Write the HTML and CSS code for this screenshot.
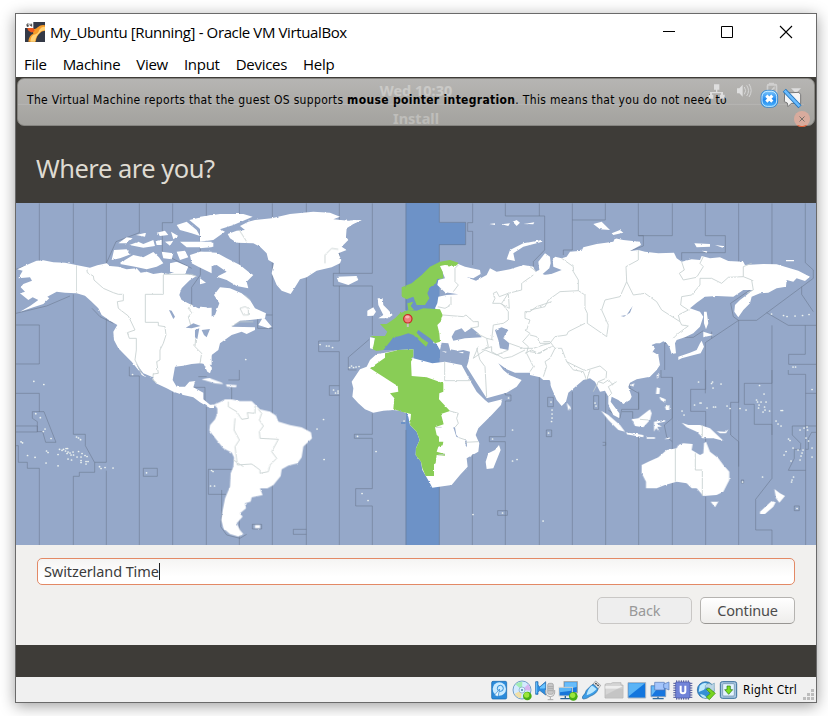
FILE: index.html
```html
<!DOCTYPE html>
<html lang="en">
<head>
<meta charset="utf-8">
<title>My_Ubuntu [Running] - Oracle VM VirtualBox</title>
<link rel="stylesheet" href="styles.css">
</head>
<body>
<main class="window">
  <header class="titlebar">
    <svg class="app-icon" viewBox="0 0 60 60">
      <rect width="60" height="60" fill="#343946"/>
      <path d="M22 19Q31 24 38 16Q48 7 60 10V26Q49 26 44 34Q35 41 32 59H10Q12 39 25 35Z" fill="#f69b28"/>
      <path d="M26 38Q40 36 43 23Q51 12 60 15V25Q47 25 43 34Q33 41 30 59H16Q17 42 26 38Z" fill="#ffd277"/>
      <path d="M7 18H25L29 26Q21 37 9 25Z" fill="#ee581e"/>
      <path d="M0 0H25V18H0Z" fill="#fff"/>
      <path d="M6 6H11M6 6V13H10V10H6M15 5V10H20M20 5V14" stroke="#333" stroke-width="2.5" fill="none"/>
    </svg>
    <h1 class="title">My_Ubuntu [Running] - Oracle VM VirtualBox</h1>
    <svg class="controls" viewBox="0 0 140 20" fill="none" stroke="#000">
      <path d="M5 9.500H17M63.500 4.500H74.500V15.500H63.500Z"/>
      <path d="M122 4L134 16M134 4L122 16" stroke-width="1.100"/>
    </svg>
  </header>
  <nav class="menu"><span>File</span><span>Machine</span><span>View</span><span>Input</span><span>Devices</span><span>Help</span></nav>

  <section class="guest">
    <div class="panel">Wed 10:30</div>
    <div class="installer-bar">Install</div>
    <div class="message">
      <p>The Virtual Machine reports that the guest OS supports <b>mouse pointer integration</b>. This means that you do not need to</p>
      <svg class="message-icons" viewBox="0 0 330 144">
        <g fill="#dedede" stroke="none">
          <path d="M60 19H76V35H70V42H87V50H92V62H78V50H81V46H54V50H58V62H44V50H48V42H66V35H60Z"/>
          <path d="M129 31H136L146 20V56L136 46H129Z"/>
          <path d="M151 27Q159 38 151 49M158 22Q169 38 158 54M165 18Q178 38 165 57" fill="none" stroke="#d6d6d6" stroke-width="3"/>
          <path d="M218 52V24Q218 17 224 17H225V14H240V17H245Q250 17 250 24V51H245V23H223V52Z" opacity=".65"/>
          <path d="M228 39L242 24V34H238L234 43Z" opacity=".7"/><path d="M291 31H321L306 46Z"/>
        </g>
        <path d="M-2200 79H330" stroke="#fff" stroke-opacity=".14" stroke-width="3"/>
        <defs><linearGradient id="blue" x2="0" y2="1"><stop stop-color="#82cbff"/><stop offset=".55" stop-color="#2188ed"/><stop offset="1" stop-color="#51b7ff"/></linearGradient></defs>
        <rect x="201" y="37" width="50" height="51" rx="18" fill="url(#blue)" stroke="#2377c5" stroke-width="2"/>
        <rect x="204" y="40" width="44" height="45" rx="16" fill="none" stroke="#dbf4ff" stroke-width="2.500"/>
        <path d="M217 53L235 71M235 53L217 71" stroke="#fff" stroke-width="9"/>
        <path d="M272 45L315 43L320 50V77L292 76L282 86L280 75L271 71Z" fill="#f4f4f4" stroke="#777" stroke-width="3"/>
        <path d="M271 37L318 86" stroke="#2574b9" stroke-width="13"/><path d="M272 38L317 85" stroke="#6abcff" stroke-width="8"/>
      </svg>
    </div>
    <svg class="guest-close" viewBox="0 0 16 16"><circle cx="8" cy="8" r="8" fill="#d8ab9d"/><path d="M3.500 14.500Q8 17 12.500 14.500" fill="none" stroke="#df5428"/><path d="M5.500 5.500L10.500 10.500M10.500 5.500L5.500 10.500" stroke="#777069"/></svg>
    <h2 class="question">Where are you?</h2>

    <svg class="map" viewBox="16 203 800 342">
      <defs><filter id="coast" x="0" y="0" width="100%" height="100%" color-interpolation-filters="sRGB"><feTurbulence type="fractalNoise" baseFrequency=".25" numOctaves="3" seed="4"/><feDisplacementMap in="SourceGraphic" scale="2" xChannelSelector="R" yChannelSelector="G"/></filter></defs>
      <rect x="16" y="203" width="800" height="342" fill="#95a8c9"/>
      <path class="active" d="M405.700 203H439.500V222.500H465.500V245H439.500V545H405.700V422H401V424H406V413H410V320H405.700ZM380 350L391 334L418 330L440 330V358L432 363L410 358L410 350Z"/>

      <g class="zones">
        <g transform="translate(10 200) scale(.3333)"><path d="M88 10V190M190 10V190M190 283V703H226V737L254 788V817H208V829H190V1035M289 10V190M289 350V787H254M289 812V1035M388 10V98L318 125L289 190M488 10V68H457V160L545 205M571 50V225L545 262V320M18 208L40 200M18 340L110 318L180 288M18 375H88V492H18M18 580H88V636M18 678H82V696H18M67 635H102L138 727H107L98 695H82V665L67 655ZM25 737V787H52V805H88V1035M18 737H25M246 325L270 350L310 370M358 500V528H388V1035M488 575V1035M589 620V1035M400 805H442V829H400Z"/></g>
        <g transform="translate(200 200) scale(.3333)"><path d="M19 10V50M118 10V50M118 90L138 125M118 125V195M217 10V345H180M217 345V385H173V350M319 10V1035M418 10V220M418 258V423H356V455H418V1035M517 10V220H400V258H517V405M508 418L445 472V510H470M517 640V703H463V715H517V866H467V918H517V1035M217 385V1035M118 510V540H85M118 900V1035"/></g>
        <g transform="translate(180 370) scale(.3333)"><path d="M158 298H85V373H138M217 463H245V477H217ZM379 478H340V493H379M478 47H448V76H478M24 52H75V95M55 20H80M155 50V90M125 360V430L122 470L140 495L180 505L200 493"/></g>
        <g transform="translate(350 200) scale(.3333)"><path d="M268 10V67H347V134H268V185M368 10V68H353V94H368V195M466 10V48H584V150L550 185V200M568 10V48M268 860V1035M168 330V10M168 690V1035"/></g>
        <g transform="translate(530 200) scale(.3333)"><path d="M127 10V60H226V10M127 60V150H100V165M325 10V107H427V10M325 107H340V138L280 160M526 10V107H586V158H455V180M626 10V185M726 10V195M826 10V188L850 210V235L680 361H625L610 350L602 310L660 270M815 260V283L850 335M710 338L775 376H858M626 361L526 428V580M545 395V415M858 493H776V463H826V376M626 361V800M726 376V705M420 430H404V510M520 392L490 412H440"/></g>
        <g transform="translate(345 340) scale(.3333)"><path d="M382 335V615M481 110V165H498V183H481V290H433V305H481V615M583 105V615M458 512H487V526H458Z"/></g>
        <g transform="translate(540 370) scale(.3333)"><path d="M97 65V525M197 70V525M296 200V525M161 77H176V118H161ZM296 65V118H245L240 145L205 120M296 118V70M270 40V55L296 70M23 82H40V110H23ZM19 180H35V200H19ZM188 217H197V226H188M246 125H278V145M397 22V525M363 0V22H397V145L373 165L380 200L397 215M497 0V58H452V124H497V215M497 380V525M596 0V97H572V195L596 215V525M696 0V40H613V103H643V163H696V325L647 388V480H696V525M745 0V13H797V525M797 70H828M828 168H757V195L782 220V238H763V265L745 301H797M828 187H815L805 205V238H797M763 408H778V422H763ZM604 330H611V339H604Z"/></g>
      </g>

      <g class="land" filter="url(#coast)">
        <g transform="translate(10 200) scale(.3333)">
          <path d="M22 208L50 195L78 183L100 181L130 187L165 188L210 197L240 203L262 196L290 190L300 198L325 200L350 208L380 205L392 218L410 215L430 222L455 218L475 222L500 214L530 222L560 228L540 240L530 250L515 265L508 285L515 300L545 315L565 325L605 323V495L570 490L545 492L520 497L495 500L488 540L500 560L525 560L538 545L556 543L550 562L580 578V598L600 614H612V624H600L570 607L550 592L520 585L490 575L470 565L438 550L425 530L400 520L378 490L395 525L408 532L385 510L365 485L350 470L325 445L312 420L310 395L322 375L300 362L275 345L265 325L245 305L225 287L200 280L165 278L140 275L112 290L118 295L100 312L70 322L30 335L60 318L85 300L68 292L55 300L30 280L45 275L32 262L40 252L66 242L60 232L25 235L38 212Z"/>
          <path d="M312 150L350 148L362 163L330 175L305 180ZM345 180L370 165L400 172L430 156L447 172L460 190L440 200L410 208L375 200L330 192ZM325 130L350 112L368 115L350 130ZM358 135L385 125L400 132L430 120L435 138L400 143ZM378 105L408 98L405 110ZM440 98L465 92L475 105L450 108ZM483 95L505 108L490 118ZM500 75L530 65L560 90L570 108L545 100L510 90ZM538 60L605 45V115L580 108L568 85ZM510 125H605V142H530ZM500 155L525 152L535 172L510 180ZM455 155L490 160L485 178L460 175ZM540 165L570 155H605V220L565 200L545 190ZM480 190L500 185L535 200L525 222L480 215ZM437 124L455 120V135H440ZM465 125L490 122L480 137Z"/>
          <path d="M605 500H592L598 510H605ZM575 538L600 535L605 542Z"/>
        </g>
        <g transform="translate(200 200) scale(.3333)">
          <path d="M83 102L110 92L135 90L120 78L145 65L165 60L215 55L270 42L340 35L390 38L420 50L400 58L445 62L485 60L460 72L440 85L438 110L445 120L425 140L440 150L415 160L424 180L420 190L395 202L350 212L320 232L300 238L280 270L272 282L245 272L230 255L215 220L222 190L205 180L200 160L180 140L160 130L110 128L90 115Z"/>
          <path d="M0 50L60 42L130 42L158 50L130 62L100 75L60 88L75 95L40 120L0 125ZM0 128H40V140L0 145ZM0 155L50 158L80 175L120 195L145 215L160 225L140 245L145 265L110 258L80 240L50 230L80 215L50 195L20 200L0 190ZM0 235L18 248L0 253ZM0 320L20 322L32 350L45 345L58 310L42 285L60 262L90 265L125 280L150 300L165 325L198 340L195 355L150 360L120 362L95 380L165 382L165 390L140 402L125 395L95 405L60 430L55 450L35 465L25 485L35 505L30 520L22 515L10 490L-5 480ZM175 375L190 350L215 380L205 385ZM410 230L470 228L475 240L445 255L415 245ZM533 295H548L550 315L565 330L578 345L565 355H535L550 345L535 315ZM502 332L520 322L528 335L520 347L502 348Z"/>
        </g>
        <g transform="translate(180 370) scale(.3333)">
          <path d="M68 92L88 108L103 103L118 97L135 88H155L180 93H215L240 118L270 125L288 137L295 155L330 165L365 172L393 187L396 205L370 230L365 262L352 280L325 287L305 298L302 318L280 345L262 355H240L248 375L215 382L212 395L195 400L198 415L180 430L188 440L170 460L180 480L190 492L175 500L150 492L130 475L124 450L128 420L135 385L150 350L152 310L160 290L162 262L155 248L130 235L110 210L88 182L90 165L105 148L112 130V115L105 107L90 112Z"/>
          <path d="M65 28L90 25L125 38L130 42L105 40ZM138 43L170 45L168 52L140 50ZM105 50L118 51M225 465H240V474H225Z"/>
        </g>
        <g transform="translate(350 200) scale(.3333)">
          <path d="M325 192L345 200L390 210L392 222L370 235L350 232L378 242L410 225L420 205L440 215L480 208L520 195L550 200L556 215L580 225L605 222V545L580 528L560 518H495L470 508L445 490L460 510L478 525L515 540L500 560L470 578L410 595L380 548L350 500L355 485L360 455L340 450L325 452L300 448L295 430L275 428L270 450L258 430L250 430L265 335L255 325L262 310L265 290L290 285L325 283L285 277L262 255L265 240L285 235L275 210L260 200L290 190Z"/>
          <path d="M575 120L577 125L520 140L490 160L495 183L470 178L480 150L520 130ZM60 412L75 415L70 448L60 445ZM418 72L435 70V75ZM455 73L480 70L475 78ZM488 65L500 60L510 68L500 78ZM520 72L553 67L550 73ZM0 62L35 60L0 75ZM275 453L290 455L288 458ZM325 458L340 455V460Z"/>
        </g>
        <g transform="translate(530 200) scale(.3333)">
          <path d="M0 200L15 215L28 210L25 185L45 160L60 170L62 190L58 205L38 222L50 227L95 210L70 200L68 180L75 170L95 175L110 170L120 155L155 152L160 142L200 132L250 125L255 115L280 120L330 125L333 135L300 153L325 150L345 155L385 160L432 158L440 175L455 185L485 178L510 180L515 168L540 175L570 172L595 183L640 185L645 195L700 192L740 193L775 203L805 212L840 230L825 243L800 235L790 245L770 240L768 260L740 265L715 278L690 280L665 290L660 310L640 330L625 352L613 335L615 315L630 300L650 285L668 270L640 270L610 290L560 288L525 290L500 308L480 325L510 335L520 350L510 380L490 400L465 412L440 420L435 430L438 460L425 462L418 440L410 430L400 424L390 430L378 430L365 435L375 445L368 455L385 465L390 495L380 510L360 530L320 538L300 548L295 560L305 590L300 600L280 612L265 600L245 590L242 605L268 640V655L250 645L235 615V590L225 572L210 575L195 545L180 535L160 540L115 578L108 605L95 618L80 600L63 560L60 540L40 540L30 532L0 525Z"/>
          <path d="M190 72L215 65L240 90L210 88ZM245 100L270 90L280 98L250 105ZM493 130L540 132V140L500 142ZM555 135L580 138L578 143ZM768 180H792V184H768ZM515 152L532 154L530 158ZM520 395L530 398L550 405L520 412ZM515 422L522 440L512 460L480 468L455 475L445 480V470L480 458L500 450L510 430ZM522 335H530L535 370L528 388L522 370Z"/>
        </g>
        <g transform="translate(345 340) scale(.3333)">
          <path d="M95 42L120 38L160 30L205 28V55L225 60L262 70L300 65L350 75L380 130L395 155L420 180L430 188L472 178L468 195L440 225L400 265L392 285L403 310L400 335L365 355L368 380L345 405L320 435L262 443L255 430L232 390L228 365L212 345L213 325L224 300L215 275L195 255L190 230L185 220L165 212L145 210L115 212L85 218L60 208L40 190L22 170L25 145L20 125L45 88L65 80L75 60ZM462 315L467 330L445 385L425 387L422 365L430 340L450 330Z"/>
        </g>
        <g transform="translate(540 370) scale(.3333)">
          <path d="M305 285L325 275L355 262L380 240L410 235L415 225L430 220L458 222L455 240L480 255L490 250L492 220L498 215L510 245L535 265L550 285L568 305V330L550 365L530 375L490 378L470 355H455L440 340L410 335L375 345L350 355H318V335L305 310ZM512 395H535L525 412ZM703 357L720 370L735 378L718 398L708 385ZM695 393L707 397L700 410L675 432L660 432V425ZM183 122L205 135L240 165L255 185L235 180L205 150ZM255 187L310 195V202L258 193ZM275 148L295 145L330 118L335 130L330 150L310 172L285 168ZM425 158L445 165L480 165L510 175L550 212L520 205H490L470 185L440 172ZM350 52L360 55L358 72L348 72ZM358 80L375 87V98L362 90ZM375 110L388 105V120L378 120ZM80 98L92 112L85 122ZM350 15L358 12L352 27ZM271 45L283 40L280 50ZM342 155L375 150V155L350 160L365 170L352 170L358 185L348 175L342 185ZM372 208L390 202L388 207ZM320 202L345 202V206H320ZM530 184L555 185L565 178L558 190H540Z"/>
        </g>
        <g class="green">
          <path transform="translate(350 200) scale(.3333)" d="M155 262L185 250L215 225L240 200L270 185L300 180L325 188L320 198L285 195L270 198L278 215L280 235L262 237L258 250L240 262L232 280L238 295L225 315L200 315L190 290L170 298L155 290ZM172 310L190 305L182 318L192 330L175 330ZM90 372H110L135 355L150 340L175 330L200 332L220 325L270 328L278 345L272 365L262 375L268 400L270 425L255 430L240 415L205 390L200 398L215 415L235 428L228 440L212 425L190 405L175 400L150 408L130 412L120 425L100 450L80 453L68 448L75 415L60 408H105L112 395Z"/>
          <path transform="translate(345 340) scale(.3333)" d="M75 85L120 53V40L160 30L205 28V52L198 65L200 108L245 112L295 130V155L283 160L282 178L315 213L288 222L296 253L270 262L275 285L282 290V305H295L293 316L280 320L275 335L300 342V347L275 345L272 370L267 373V408H242L232 385L228 365L212 345L213 325L224 300L215 275L195 255L198 222L170 215L145 207L148 175L135 160L160 155L158 138Z"/>
        </g>
        <g fill="#95a8c9">
          <path transform="translate(350 200) scale(.3333)" d="M305 410L315 392L335 385L345 397L365 383L385 400L395 412L345 415L310 422ZM435 390L455 382L475 390L465 405L460 415L478 430L475 450L450 445L445 420Z"/>
          <path transform="translate(10 200) scale(.3333)" d="M477 330L485 332L495 350L490 357ZM527 383L550 370L572 378L545 385ZM555 390L568 385L562 418L555 412ZM575 390L600 387L590 412L582 405Z"/>
          <path transform="translate(530 200) scale(.3333)" d="M272 348L290 345L308 318L300 338L282 350Z"/>
          <path transform="translate(345 340) scale(.3333)" d="M325 262L330 262L334 285L342 293L334 290ZM360 297L365 302L366 322L361 315Z"/>
        </g>
      </g>

      <g class="borders" filter="url(#coast)">
        <path transform="translate(10 200) scale(.3333)" d="M199 196V280M230 205L232 218L250 228L252 240L280 265L310 278L325 283H340V302L322 305L325 325L355 348L368 375L375 390L352 398L358 415H379V450L375 480L395 520M460 225V283H406V367H445V377L465 380L468 405L460 430L450 450V480L440 485L445 520L430 522M460 223H545L560 230M545 312L535 325L545 338L535 350L542 375M557 415L555 440L575 460L570 490M430 520L428 540L440 548"/>
        <path transform="translate(200 200) scale(.3333)" d="M118 90L140 125M120 325L135 320L145 325V345L130 345ZM135 285L150 300M375 190V165L395 145L415 148M95 378L120 365H160"/>
        <path transform="translate(180 370) scale(.3333)" d="M145 95V110L170 125L185 148L205 145L202 128L225 130V108M165 145L162 180L178 210L165 230L172 285L215 282L240 300V310L265 305L270 285L290 265L275 245L295 208L240 205L238 185L250 168L238 150L245 130L235 118M190 290L160 270"/>
        <path transform="translate(350 200) scale(.3333)" d="M325 195L315 205V245L325 255L310 275M262 320L285 325L303 315V290M278 345L340 350L348 345L370 365L385 365V380L360 385M380 400L410 415L415 440L405 445M385 440L370 475L405 450L440 465L475 450M410 415L430 420M425 420L430 375L460 370L475 360V335L455 310L475 280L515 270V250L550 225M430 280L440 275L448 290L475 280L478 325L450 310H428L435 295ZM605 305L560 320L540 335H525V355L540 360L530 390H525L540 400L518 425L535 440L530 460L550 500L540 515M478 430L520 445L550 445L580 435L600 430M410 590L405 500L390 480L380 445M525 460L545 450L565 460L605 440"/>
        <path transform="translate(530 200) scale(.3333)" d="M0 200L20 215M95 175L130 200L130 215L145 240L145 272L165 285L165 325L172 340V370L230 410L235 375L215 330L225 300L270 290L290 245L310 285L345 280L380 305L395 330L450 365L445 345L475 330L452 315L455 290L485 285L510 255V235L545 235L575 250L595 232L640 230V200L665 190M290 245L288 200L325 180V150M448 220L460 240L500 232L520 200L510 190L520 170M455 185L463 210L448 220M640 230L665 240L670 270L650 280M450 365L455 375L475 378L445 400L430 415M0 330L45 320L55 300L90 275L145 272M0 405L20 410L30 430L60 430L75 410L110 405L115 395L165 370M40 425H60L75 445L60 475L45 485L50 500L40 530M75 445H95L110 485L165 512L210 498L230 515L228 535L205 545L190 575M0 455L30 460L50 445M110 485L130 510L160 515L170 540L180 510M205 545L220 550L235 540L250 555"/>
        <path transform="translate(345 340) scale(.3333)" d="M299 65V122H380M315 213L340 220L335 235L340 250L330 262M342 293L363 300M360 307L400 305M272 262H290M300 342L280 345M410 30L440 20L440 35L475 55L500 50L540 30"/>
        <path transform="translate(540 370) scale(.3333)" d="M406 235V335M466 250V300H487V378M487 165V200M205 80L215 70L205 50L230 35M300 148L325 150"/>
      </g>
      <g class="islands">
        <path d="M33.800 381.300h.1M43.800 384.500h.1M35.700 413.700h.1M40.300 417.700h.1M51 438.500h.1M45 429h.1M43.300 431.500h.1M21 441.800h.1M22.500 442.800h.1M27.500 455.500h.1M35 457.300h.1M46.500 451h.1M48 452.500h.1M46 463h.1M58 465.800h.1M58 454.500h.1M59.500 449.300h.1M63.500 449.300h.1M62 450.300h.1M66 448.500h.1M67.500 448.500h.1M65.500 451h.1M68 452h.1M70 453h.1M71 455h.1M73 452h.1M73.500 455h.1M67 453.500h.1M68 459h.1M71.500 460h.1M77 457h.1M78.500 451.500h.1M82 453.500h.1M81 457h.1M81 460.500h.1M81 462.500h.1M86 461.500h.1M88 461.500h.1M86 464h.1M87 456.500h.1M85 455.500h.1M76.500 437h.1M78.500 438h.1M80.500 439.700h.1M99.500 466.700h.1M101 468.500h.1M105 467.500h.1M113 468h.1M146.500 472.800h.1M132.500 374.500h.1M245.700 359.500h.1M320 344.500h.1M326.500 346h.1M329 346h.1M332.500 347.500h.1M333.500 390h.1M335.500 393h.1M338 391h.1M338 393h.1M317 429h.1M323.500 419.500h.1M324 459.500h.2M357.500 436.300h.1M376 451.500h.1M362 493.500h.1M368 500.500h.1M211.500 470.500h.1M213 471.500h.1M210.500 486h.1M214.500 486h.1M351.500 366h.1M349.500 367.500h.1M353.500 367.500h.1M356 367h.1M359 366.500h.1M404 421h.1M473 514.500h.1M502.500 513h.1M492.500 439h.1M512.500 430h.1M517 459.500h.1M512.500 461h.1M508.500 398h.1M543 521h.2M551 402h.1M552 410h.1M552 414h.1M552 418h.1M551.500 421.500h.1M548.500 433h.1M595 403h.1M596 406h.1M712.500 382h.1M713 388h.1M711.500 383.500h.1M694.500 405h.1M700 403h.1M701 403h.1M707 408h.1M713.500 407h.1M715.500 407h.1M727 406h.1M730 408.500h.1M740 408.500h.1M746 410h.1M698.500 382h.1M759.500 385.500h.1M764 394h.1M756.500 400h.1M757.500 402h.1M761 402h.1M759 405h.1M758.500 408h.1M764.500 407h.1M766 402h.1M765 410h.1M763 412h.1M769.500 411h.1M781 410.500h.1M782.500 410.500h.1M776 421h.1M778 424h.1M781 426h.1M800 430h.1M804 428h.1M807 427h.1M807.500 430h.1M806 438h.1M808.500 441h.1M788.500 439h.1M790 440.500h.1M784 455h.1M786 451.500h.1M791 461h.1M793 448h.1M798 450h.1M801 456h.1M802 453h.1M800 460h.1M803 450h.1M812 448h.1M812 457h.1M793.500 477h.1M792 480h.1M791.500 482h.1M762.500 477h.1M797 508.500h.1M742.500 482h.1M771.500 314h.1M783.500 315.500h.1M787 316.500h.1M795 316h.1M802.500 315.500h.1M809 314.500h.1M793 367h.1M795.500 367h.1M812 389.500h.1M721 384h.1M682 411h.1M684 415h.1M665 400h.1M667 406h.1"/>
      </g>
      <path d="M407.800 322V327" stroke="#c4c4c4" stroke-width="2"/><circle cx="407.800" cy="318.800" r="4.200" fill="#ef7f7c" stroke="#c92a24" stroke-width="1.200"/><ellipse cx="407.400" cy="317" rx="2.200" ry="1.400" fill="#fab5b0"/>
    </svg>

    <div class="form">
      <div class="entry"><span>Switzerland Time</span></div>
      <div class="buttons"><button class="back" disabled>Back</button><button>Continue</button></div>
    </div>
  </section>

  <footer class="status">
    <svg viewBox="0 0 69 69"><rect x="8" y="7" width="45" height="53" rx="4" fill="#2b8bdb" stroke="#1264a9" stroke-width="2"/><circle cx="31" cy="30" r="20" fill="#c9eaff"/><circle cx="34" cy="28" r="9" fill="none" stroke="#308ed8" stroke-width="3"/><path d="M32 30L16 49L27 53Z" fill="#eefaff" stroke="#2881cc" stroke-width="2"/></svg>
    <svg viewBox="0 0 69 69"><circle cx="30" cy="33" r="27" fill="#d3eaff" stroke="#3877ad" stroke-width="2"/><path d="M30 33L10 16Q19 7 31 8Z" fill="#a3ecb4"/><path d="M30 33L49 14Q56 25 55 35Z" fill="#d6b6f0"/><path d="M30 33L8 44Q15 57 27 58Z" fill="#f0dfa6"/><circle cx="30" cy="33" r="9" fill="#def3ff" stroke="#7da5c7" stroke-width="2"/><circle cx="30" cy="33" r="3" fill="#4e83ae"/><circle cx="46" cy="51" r="13" fill="#48ae14"/><circle cx="44" cy="48" r="8" fill="#9be53b"/></svg>
    <svg viewBox="0 0 69 69"><path d="M2 8H9V18L14 24L32 8V48L14 34L9 40V46H2Z" fill="#2d8de0" stroke="#1762a8" stroke-width="2"/><path d="M5 10V43M15 27L29 15V27Z" stroke="#6cc5ff" fill="#6cc5ff" stroke-width="3"/><rect x="38" y="13" width="17" height="33" rx="5" fill="#c8c8c8" stroke="#999" stroke-width="2"/><path d="M32 33V42Q34 53 46 53Q58 53 59 42V33M46 53V62M38 62H55M39 23H55M39 29H55M39 35H55" fill="none" stroke="#aaa" stroke-width="3"/></svg>
    <svg viewBox="0 0 69 69"><rect x="18" y="8" width="40" height="33" fill="#1879de" stroke="#a5a5a0" stroke-width="3"/><path d="M20 10H56V24L20 32Z" fill="#67bdfb"/><rect x="3" y="25" width="40" height="26" fill="#1876da" stroke="#d7d7d0" stroke-width="3"/><path d="M5 27H40V35L5 40Z" fill="#59b5f6"/><path d="M7 59H37M22 51V59" stroke="#276296" stroke-width="4"/><circle cx="46" cy="52" r="13" fill="#48ae14"/><circle cx="44" cy="49" r="8" fill="#9be53b"/></svg>
    <svg viewBox="0 0 69 69"><path d="M36 15L44 6L59 19L50 32Z" fill="#e4e4e4" stroke="#888" stroke-width="2"/><path d="M43 13L47 16M49 17L53 20" stroke="#333" stroke-width="4"/><path d="M33 17Q38 13 51 30Q48 44 27 52Q17 60 8 60Q2 60 5 52Q14 43 16 34Z" fill="#3b9ce7" stroke="#25689b" stroke-width="2"/><path d="M32 20Q36 20 47 30Q38 41 17 49Q19 31 32 20Z" fill="#b9e7ff"/></svg>
    <svg viewBox="0 0 69 69"><path d="M3 18Q3 14 8 14H20L26 11H51V18H57V57H3Z" fill="#d5d5d5" stroke="#aaa" stroke-width="2"/><path d="M4 29V21H55V29Z" fill="#eee"/><path d="M4 48L56 22V56H4Z" fill="#bbb" opacity=".6"/></svg>
    <svg viewBox="0 0 69 69"><path d="M3 11H56V57H3Z" fill="#1376de" stroke="#abb5c0" stroke-width="3"/><path d="M5 13H54L5 52Z" fill="#5ab4f6"/></svg>
    <svg viewBox="0 0 69 69"><path d="M3 20H47V53H3Z" fill="#1676df" stroke="#7e9ec0" stroke-width="3"/><path d="M5 22H27L5 50Z" fill="#64baf7"/><path d="M8 59H41M24 53V59" stroke="#316c9d" stroke-width="4"/><path d="M14 10H43V33H14Z" fill="#a4c5fb" stroke="#5477b6" stroke-width="2"/><path d="M41 15L57 9V33L41 26Z" fill="#9dc0f8" stroke="#5477b6" stroke-width="2"/></svg>
    <svg viewBox="0 0 69 69"><path d="M11 4V62M18 4V62M25 4V62M32 4V62M39 4V62M46 4V62M1 13H58M1 20H58M1 27H58M1 34H58M1 41H58M1 48H58M1 55H58" stroke="#4e5797" stroke-width="3"/><rect x="8" y="9" width="43" height="48" rx="3" fill="#7183d8" stroke="#4653a2" stroke-width="2"/><path d="M23 20V37Q23 43 30 43Q37 43 37 37V20" fill="none" stroke="#fff" stroke-width="6"/></svg>
    <svg viewBox="0 0 69 69"><circle cx="29" cy="33" r="25" fill="#348fd6" stroke="#215f91" stroke-width="2"/><path d="M11 20Q24 6 36 16L24 32L8 39Z" fill="#c0eafd"/><path d="M12 46Q23 43 33 56Q20 60 12 46Z" fill="#b7e6fa"/><path d="M28 20Q37 8 47 17L55 12V37H34L40 29Q33 22 28 29Z" fill="#bbd5e6" stroke="#79a4ba" stroke-width="2"/><path d="M31 31L39 27L58 43L40 62L31 54L43 43Z" fill="#78d420" stroke="#388d0e" stroke-width="2"/></svg>
    <svg viewBox="0 0 69 69"><rect x="4" y="8" width="49" height="50" rx="6" fill="#a6c5e0" stroke="#386f9c" stroke-width="3"/><rect x="11" y="14" width="35" height="37" rx="3" fill="#e4f3ff" stroke="#6689a6" stroke-width="2"/><path d="M24 21H34V32H41L29 46L17 32H24Z" fill="#7be023" stroke="#26760b" stroke-width="2"/></svg>
    <span class="hostkey">Right Ctrl</span>
    <svg class="grip" viewBox="0 0 12 12"><path d="M8 0h3v3H8ZM4 4h3v3H4ZM8 4h3v3H8ZM0 8h3v3H0ZM4 8h3v3H4ZM8 8h3v3H8Z" fill="#bdbdbd"/></svg>
  </footer>
</main>
</body>
</html>
```
FILE: styles.css
```css
* { box-sizing: border-box; }
body { margin: 0; width: 828px; height: 716px; padding: 13px 0 0 15px; background: #fff; overflow: hidden; color: #000; }
.window { width: 802px; height: 690px; border: 1px solid #6a6a6a; background: #fff; box-shadow: 0 3px 14px rgba(0,0,0,.38); }
.titlebar { height: 36px; display: flex; align-items: center; padding-left: 9px; padding-right: 18px; }
.app-icon { width: 20px; height: 20px; flex: none; }
.title { margin: 0 auto 0 5px; font: 400 15px "Open Sans", sans-serif; letter-spacing: -.38px; white-space: nowrap; }
.controls { width: 140px; height: 20px; }
.menu { height: 27px; padding-left: 8px; display: flex; align-items: center; gap: 16px; font: 15px "Open Sans", sans-serif; letter-spacing: -.28px; }
.guest { position: relative; height: 600px; background: #3e3c38; font-family: "Noto Sans", sans-serif; }
.panel, .installer-bar { height: 27px; display: flex; align-items: center; justify-content: center; font-size: 14.5px; font-weight: 700; color: #e6e6e4; }
.panel { padding-bottom: 2px; }
.message { position: absolute; left: 1px; top: 1px; width: 798px; height: 48px; border: 1px solid #858480; border-radius: 7px; background: linear-gradient(rgba(202,201,199,.86), rgba(180,179,175,.86)); overflow: hidden; }
.message p { margin: 0; padding-left: 9px; line-height: 42px; font-family: "DejaVu Sans Condensed", "DejaVu Sans", sans-serif; font-size: 12px; letter-spacing: .325px; white-space: nowrap; }
.message-icons { position: absolute; top: -1px; right: 10px; width: 110px; height: 48px; overflow: visible; }
.guest-close { position: absolute; width: 16px; height: 16px; left: 778px; top: 34px; }
.question { height: 72px; margin: 0; padding: 17px 0 0 20px; font-size: 25.5px; line-height: 40px; letter-spacing: -.5px; font-weight: 400; color: #dfdbd2; }
.map { display: block; width: 800px; height: 342px; }
.active { fill: #6d92c7; }
.zones { fill: none; stroke: #67738a; stroke-opacity: .6; }
.zones path { stroke-width: 2.600px; }
.land { fill: #fff; }
.green { fill: #89cd56; }
.borders { fill: none; stroke: #c5cfcf; }
.borders path { stroke-width: 2.500px; }
.islands { fill: none; stroke: #edf3f0; stroke-width: 1.700px; stroke-linecap: round; }
.form { height: 100px; padding: 13px 21px; background: #f1f0ee; font-size: 14.5px; color: #3c3c3c; }
.entry { height: 27px; padding: 0 6px; display: flex; align-items: center; border: 1px solid #e38965; border-radius: 5px; background: linear-gradient(#f5f4f3, #fff 70%); letter-spacing: -.1px; }
.entry span { line-height: 17px; border-right: 1px solid #222; }
.buttons { display: flex; justify-content: flex-end; gap: 8px; margin-top: 12px; }
button { width: 95px; height: 27px; padding: 0 0 1px; border: 1px solid #b5b3b0; border-bottom-color: #989693; border-radius: 5px; background: linear-gradient(#fff, #eeedeb); color: #4c4c4c; font: 14.5px "Noto Sans", sans-serif; letter-spacing: -.2px; }
.back { color: #999; background: #eee; border-color: #c9c7c5; }
.status { height: 25px; display: flex; align-items: center; justify-content: flex-end; background: #f0f0f0; font: 12px "DejaVu Sans Condensed", "DejaVu Sans", sans-serif; }
.status > svg { width: 23px; height: 23px; flex: none; position: relative; top: 1px; }
.hostkey { width: 54px; margin-left: 1px; padding-top: 1px; letter-spacing: .3px; white-space: nowrap; }
.status .grip { width: 12px; height: 12px; align-self: flex-end; margin: 0 1px 2px 6px; }
```
